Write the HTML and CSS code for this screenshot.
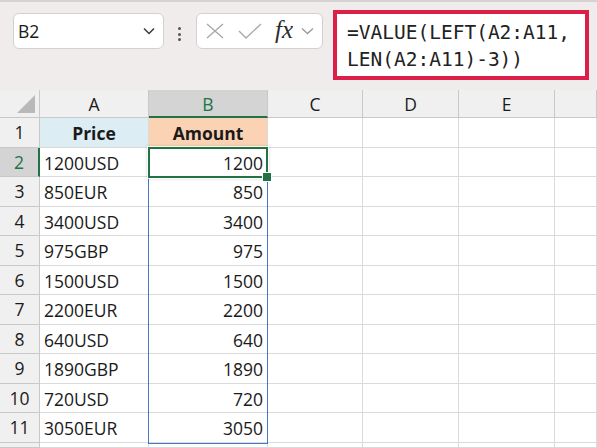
FILE: index.html
```html
<!DOCTYPE html>
<html lang="en">

<head>
  <meta charset="UTF-8">
  <meta name="viewport" content="width=device-width, initial-scale=1.0">
  <title>Sheet - VALUE / LEFT</title>
  <link rel="stylesheet" href="styles.css">
</head>

<body>
  <!-- Formula bar -->
  <div class="formula-bar">
    <div class="name-box">
      <span>B2</span>
      <svg class="chev" width="12" height="8" viewBox="0 0 12 8"><path d="M1 1.5 L6 6.5 L11 1.5" fill="none" stroke="#3a3a3a" stroke-width="1.5"/></svg>
    </div>
    <div class="dots"><i></i><i></i><i></i></div>
    <div class="fn-box">
      <svg width="18" height="16" viewBox="0 0 18 16"><path d="M1 1 L17 15 M17 1 L1 15" stroke="#a9a9a9" stroke-width="1.4" fill="none"/></svg>
      <svg width="24" height="16" viewBox="0 0 24 16"><path d="M1 8 L8 15 L23 1" stroke="#a9a9a9" stroke-width="1.4" fill="none"/></svg>
      <span class="fx">fx</span>
      <svg width="13" height="8" viewBox="0 0 13 8"><path d="M1 1.5 L6.5 6.5 L12 1.5" fill="none" stroke="#9a9a9a" stroke-width="1.3"/></svg>
    </div>
    <div class="formula">=VALUE(LEFT(A2:A11,<br>LEN(A2:A11)-3))</div>
  </div>

  <!-- Sheet -->
  <div class="sheet">
    <div class="hdr corner"><span class="tri"></span></div>
    <div class="hdr col">A</div>
    <div class="hdr col active">B</div>
    <div class="hdr col">C</div>
    <div class="hdr col">D</div>
    <div class="hdr col">E</div>
    <div class="hdr col"></div>

    <div class="hdr row">1</div>
    <div class="cell head price">Price</div>
    <div class="cell head amount">Amount</div>
    <div class="cell"></div><div class="cell"></div><div class="cell"></div><div class="cell"></div>

    <div class="hdr row active">2</div>
    <div class="cell">1200USD</div><div class="cell num">1200</div>
    <div class="cell"></div><div class="cell"></div><div class="cell"></div><div class="cell"></div>

    <div class="hdr row">3</div>
    <div class="cell">850EUR</div><div class="cell num">850</div>
    <div class="cell"></div><div class="cell"></div><div class="cell"></div><div class="cell"></div>

    <div class="hdr row">4</div>
    <div class="cell">3400USD</div><div class="cell num">3400</div>
    <div class="cell"></div><div class="cell"></div><div class="cell"></div><div class="cell"></div>

    <div class="hdr row">5</div>
    <div class="cell">975GBP</div><div class="cell num">975</div>
    <div class="cell"></div><div class="cell"></div><div class="cell"></div><div class="cell"></div>

    <div class="hdr row">6</div>
    <div class="cell">1500USD</div><div class="cell num">1500</div>
    <div class="cell"></div><div class="cell"></div><div class="cell"></div><div class="cell"></div>

    <div class="hdr row">7</div>
    <div class="cell">2200EUR</div><div class="cell num">2200</div>
    <div class="cell"></div><div class="cell"></div><div class="cell"></div><div class="cell"></div>

    <div class="hdr row">8</div>
    <div class="cell">640USD</div><div class="cell num">640</div>
    <div class="cell"></div><div class="cell"></div><div class="cell"></div><div class="cell"></div>

    <div class="hdr row">9</div>
    <div class="cell">1890GBP</div><div class="cell num">1890</div>
    <div class="cell"></div><div class="cell"></div><div class="cell"></div><div class="cell"></div>

    <div class="hdr row">10</div>
    <div class="cell">720USD</div><div class="cell num">720</div>
    <div class="cell"></div><div class="cell"></div><div class="cell"></div><div class="cell"></div>

    <div class="hdr row">11</div>
    <div class="cell">3050EUR</div><div class="cell num">3050</div>
    <div class="cell"></div><div class="cell"></div><div class="cell"></div><div class="cell"></div>

    <div class="hdr row"></div>
    <div class="cell"></div><div class="cell"></div>
    <div class="cell"></div><div class="cell"></div><div class="cell"></div><div class="cell"></div>

    <!-- overlays: spill range + active cell -->
    <div class="spill"></div>
    <div class="selected"></div>
  </div>
</body>

</html>
```

FILE: styles.css
```css
/* page */
body {
    margin: 0;
    width: 597px;
    height: 448px;
    overflow: hidden;
    background: #fff;
    font-family: "Open Sans", Arial, sans-serif;
    color: #1a1a1a;
}

/* Formula bar */
.formula-bar {
    height: 90px;
    box-sizing: border-box;
    background: #f0ecec;
    border-top: 2px solid #d6d2d2;
    display: flex;
    align-items: flex-start;
    padding-left: 13px;
}

.name-box {
    margin-top: 11px;
    width: 151px;
    height: 36px;
    box-sizing: border-box;
    background: #fff;
    border: 1px solid #d3d0d0;
    border-radius: 6px;
    display: flex;
    align-items: center;
    justify-content: space-between;
    padding: 0 8px 0 4px;
    font-size: 17.5px;
}

.dots {
    margin: 25px 0 0 14px;
    width: 3px;
    display: flex;
    flex-direction: column;
    gap: 2.5px;
}

.dots i {
    width: 3px;
    height: 3px;
    border-radius: 50%;
    background: #555;
}

.fn-box {
    margin: 11px 0 0 15px;
    width: 127px;
    height: 36px;
    box-sizing: border-box;
    background: #fff;
    border: 1px solid #d3d0d0;
    border-radius: 6px;
    display: flex;
    align-items: center;
    padding: 0 4px 0 9px;
}

.fn-box svg:nth-child(2) {
    margin-left: 14px;
}

.fn-box .fx {
    margin-left: 13px;
    font-family: "Liberation Serif", "Times New Roman", serif;
    font-style: italic;
    font-size: 25px;
    color: #2c2c2c;
    line-height: 1;
    margin-top: -3px;
}

.fn-box svg:last-child {
    margin-left: 8px;
}

.formula {
    margin: 8px 0 0 10px;
    width: 256px;
    height: 70px;
    box-sizing: border-box;
    background: #fff;
    border: 4px solid #dc1f48;
    padding: 5px 0 0 10px;
    font-family: "DejaVu Sans Mono", "Liberation Mono", monospace;
    font-size: 19.5px;
    line-height: 27px;
    color: #222;
    white-space: nowrap;
}

/* Sheet grid */
.sheet {
    position: relative;
    display: grid;
    grid-template-columns: 40px 109px 119px 95px 96px 96px 1fr;
    grid-template-rows: 28px repeat(11, 29.5px) 5px;
    font-size: 17.5px;
}

.hdr {
    background: #f0f0f0;
    border-right: 1px solid #c9c9c9;
    border-bottom: 1px solid #c9c9c9;
    display: flex;
    align-items: center;
    justify-content: center;
}

.hdr.col {
    padding-top: 1px;
}

.hdr.active {
    background: #d4d4d4;
    color: #217346;
}

.hdr.col.active {
    border-bottom: 2px solid #217346;
}

.hdr.row.active {
    border-right: 2px solid #217346;
}

.corner {
    position: relative;
}

.corner .tri {
    position: absolute;
    right: 4px;
    bottom: 4px;
    width: 0;
    height: 0;
    border-left: 18px solid transparent;
    border-bottom: 18px solid #b9b9b9;
}

.cell {
    border-right: 1px solid #dadada;
    border-bottom: 1px solid #dadada;
    padding: 2px 4px 0;
    display: flex;
    align-items: center;
    white-space: nowrap;
}

.cell.num {
    justify-content: flex-end;
}

.cell.head {
    justify-content: center;
    font-weight: bold;
}

.price {
    background: #dcedf3;
}

.amount {
    background: #fbd3b4;
}

/* overlays: placed on grid areas */
.spill {
    position: absolute;
    grid-column: 3 / 4;
    grid-row: 3 / 13;
    inset: -1px 0 -1px -1px;
    border: 1.5px solid #4a74c4;
}

.selected {
    position: absolute;
    grid-column: 3 / 4;
    grid-row: 3 / 4;
    inset: -1px 0 -1px -1px;
    border: 2px solid #217346;
    box-shadow: 0 0 0 1px rgba(255, 255, 255, 0.8), 0 0 2px 2px rgba(0, 0, 0, 0.08);
}

.selected::after {
    content: "";
    position: absolute;
    right: -6px;
    bottom: -6px;
    width: 8px;
    height: 8px;
    background: #217346;
    border: 1px solid #fff;
}
```
